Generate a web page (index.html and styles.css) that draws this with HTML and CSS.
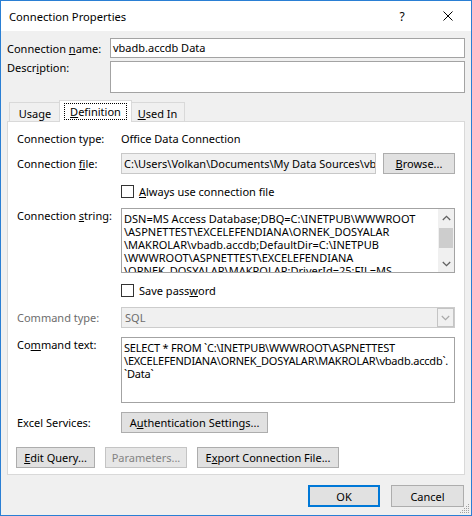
FILE: index.html
```html
<!DOCTYPE html>
<html>
<head>
<meta charset="utf-8">
<title>Connection Properties</title>
<link rel="stylesheet" href="styles.css">
</head>
<body>
<div class="win">
  <div class="titlebar">
    <div class="title">Connection Properties</div>
    <div class="tbtn help">?</div>
    <div class="tbtn close"><svg width="10" height="10" viewBox="0 0 10 10"><path d="M0.5 0.5L9.5 9.5M9.5 0.5L0.5 9.5" stroke="#000" stroke-width="1" fill="none"/></svg></div>
  </div>
  <div class="content">
    <div class="frow r-name">
      <div class="flabel">Connection <u>n</u>ame:</div>
      <div class="edit name">vbadb.accdb Data</div>
    </div>
    <div class="frow r-desc">
      <div class="flabel top">Descr<u>i</u>ption:</div>
      <div class="edit desc"></div>
    </div>
    <div class="tabs">
      <div class="tab t-usage">Usa<u>g</u>e</div>
      <div class="tab t-def active"><span class="focus"><u>D</u>efinition</span></div>
      <div class="tab t-used"><u>U</u>sed In</div>
    </div>
    <div class="panel">
      <div class="prow p1">
        <div class="plabel">Connection type:</div>
        <div class="val">Office Data Connection</div>
      </div>
      <div class="prow p2">
        <div class="plabel">Connection <u>f</u>ile:</div>
        <div class="edit ro file"><span class="nowrap">C:\Users\Volkan\Documents\My Data Sources\vb</span></div>
        <div class="btn browse"><u>B</u>rowse...</div>
      </div>
      <div class="prow p3 chkrow">
        <div class="plabel"></div>
        <span class="chk"></span>
        <span class="chktext"><u>A</u>lways use connection file</span>
      </div>
      <div class="prow p4 toprow">
        <div class="plabel">Connection <u>s</u>tring:</div>
        <div class="edit multi cs">
          <div class="lines">
            <div>DSN=MS Access Database;DBQ=C:\INETPUB\WWWROOT</div>
            <div>\ASPNETTEST\EXCELEFENDIANA\ORNEK_DOSYALAR</div>
            <div>\MAKROLAR\vbadb.accdb;DefaultDir=C:\INETPUB</div>
            <div>\WWWROOT\ASPNETTEST\EXCELEFENDIANA</div>
            <div>\ORNEK_DOSYALAR\MAKROLAR;DriverId=25;FIL=MS</div>
          </div>
          <div class="sb">
            <div class="sbarrow"><svg width="9" height="6" viewBox="0 0 9 6"><path d="M0.8 5L4.5 1.3L8.2 5" stroke="#606060" stroke-width="1.3" fill="none"/></svg></div>
            <div class="sbtrack"><div class="thumb"></div></div>
            <div class="sbarrow"><svg width="9" height="6" viewBox="0 0 9 6"><path d="M0.8 1L4.5 4.7L8.2 1" stroke="#606060" stroke-width="1.3" fill="none"/></svg></div>
          </div>
        </div>
      </div>
      <div class="prow p5 chkrow">
        <div class="plabel"></div>
        <span class="chk"></span>
        <span class="chktext">Save pass<u>w</u>ord</span>
      </div>
      <div class="prow p6">
        <div class="plabel dis">Command type:</div>
        <div class="select">
          <span class="selval">SQL</span>
          <span class="selbtn"><svg width="9" height="6" viewBox="0 0 9 6"><path d="M0.8 1L4.5 4.7L8.2 1" stroke="#a8a8a8" stroke-width="1.2" fill="none"/></svg></span>
        </div>
      </div>
      <div class="prow p7 toprow">
        <div class="plabel">Co<u>m</u>mand text:</div>
        <div class="edit multi ct">
          <div class="lines">
            <div>SELECT * FROM `C:\INETPUB\WWWROOT\ASPNETTEST</div>
            <div>\EXCELEFENDIANA\ORNEK_DOSYALAR\MAKROLAR\vbadb.accdb`.</div>
            <div>`Data`</div>
          </div>
        </div>
      </div>
      <div class="prow p8">
        <div class="plabel">Excel Services:</div>
        <div class="btn auth">A<u>u</u>thentication Settings...</div>
      </div>
      <div class="prow p9">
        <div class="btn editq"><u>E</u>dit Query...</div>
        <div class="btn params disabled">Parameters...</div>
        <div class="btn export">E<u>x</u>port Connection File...</div>
      </div>
    </div>
    <div class="footer">
      <div class="btn ok">OK</div>
      <div class="btn cancel">Cancel</div>
    </div>
  </div>
  <div class="grip"><svg width="10" height="10" viewBox="0 0 10 10"><g fill="#a0a0a0"><rect x="8" y="0" width="1" height="1"/><rect x="6" y="2" width="1" height="1"/><rect x="8" y="2" width="1" height="1"/><rect x="4" y="4" width="1" height="1"/><rect x="6" y="4" width="1" height="1"/><rect x="8" y="4" width="1" height="1"/><rect x="2" y="6" width="1" height="1"/><rect x="4" y="6" width="1" height="1"/><rect x="6" y="6" width="1" height="1"/><rect x="8" y="6" width="1" height="1"/><rect x="0" y="8" width="1" height="1"/><rect x="2" y="8" width="1" height="1"/><rect x="4" y="8" width="1" height="1"/><rect x="6" y="8" width="1" height="1"/><rect x="8" y="8" width="1" height="1"/></g></svg></div>
</div>
</body>
</html>
```
FILE: styles.css
```css
* { box-sizing: border-box; }
html, body { margin: 0; padding: 0; }
body {
  width: 472px;
  height: 516px;
  overflow: hidden;
  background: #ffffff;
  font-family: "Noto Sans", "Open Sans", sans-serif;
  font-size: 11px;
  line-height: 15px;
  color: #000;
}
u { text-decoration: underline; text-underline-offset: 1px; text-decoration-thickness: 1px; }

.win {
  width: 472px;
  height: 516px;
  border: 1px solid #2a7fd4;
  background: #f0f0f0;
  display: flex;
  flex-direction: column;
  position: relative;
}

.titlebar {
  height: 30px;
  flex-shrink: 0;
  background: #ffffff;
  display: flex;
  align-items: center;
}
.title { flex: 1; padding-left: 8px; font-size: 11.2px; padding-top: 1px; }
.tbtn {
  width: 46px;
  height: 30px;
  display: flex;
  align-items: center;
  justify-content: center;
}
.help { font-size: 12px; padding-top: 1px; }

.content {
  flex: 1;
  display: flex;
  flex-direction: column;
  padding: 0 6px;
}

.frow { display: flex; }
.r-name { margin-top: 7px; height: 20px; align-items: center; }
.r-desc { margin-top: 3px; height: 32px; align-items: flex-start; }
.flabel { width: 103px; flex-shrink: 0; }
.flabel.top { margin-top: -1px; }

.edit {
  border: 1px solid #a3a3a3;
  background: #ffffff;
  overflow: hidden;
  white-space: nowrap;
}
.name { flex: 1; height: 20px; padding: 1px 0 0 2px; line-height: 16px; }
.desc { flex: 1; height: 32px; }

.tabs {
  margin-top: 7px;
  height: 21px;
  display: flex;
  align-items: flex-end;
  padding-left: 2px;
}
.tab {
  height: 19px;
  border: 1px solid #d9d9d9;
  border-bottom: none;
  background: #f0f0f0;
  text-align: center;
  padding-top: 3px;
}
.t-usage { width: 52px; }
.t-def {
  width: 73px;
  margin-left: -2px;
  height: 22px;
  margin-bottom: -1px;
  background: #ffffff;
  position: relative;
  z-index: 2;
  padding-top: 2px;
  display: flex;
  justify-content: center;
}
.t-used { width: 55px; margin-left: -2px; }
.focus {
  display: block;
  border: 1px dotted #000;
  width: 63px;
  height: 17px;
  line-height: 15px;
}

.panel {
  height: 354px;
  flex-shrink: 0;
  border: 1px solid #d9d9d9;
  background: #ffffff;
  padding: 0 8px 6px 9px;
  display: flex;
  flex-direction: column;
}
.prow { display: flex; align-items: center; flex-shrink: 0; }
.toprow { align-items: flex-start; }
.plabel { width: 104px; flex-shrink: 0; }
.plabel.dis { color: #6d6d6d; }

.p1 { margin-top: 9px; height: 15px; }
.p2 { margin-top: 7px; height: 21px; }
.p3 { margin-top: 10px; height: 15px; }
.p4 { margin-top: 9px; height: 65px; }
.p5 { margin-top: 10px; height: 15px; }
.p6 { margin-top: 9px; height: 21px; }
.p7 { margin-top: 9px; height: 66px; }
.p8 { margin-top: 9px; height: 21px; }
.p9 { margin-top: 14px; height: 21px; margin-left: -1px; gap: 10px; }

.ro { background: #f0f0f0; border-color: #c8c8c8; }
.file { width: 255px; height: 21px; padding: 2px 0 0 2px; line-height: 15px; }
.nowrap { white-space: nowrap; }

.btn {
  height: 21px;
  border: 1px solid #adadad;
  background: #e1e1e1;
  display: flex;
  align-items: center;
  justify-content: center;
  white-space: nowrap;
  flex-shrink: 0;
}
.browse { margin-left: 7px; width: 72px; }
.auth { width: 147px; }
.editq { width: 79px; }
.params { width: 82px; }
.export { width: 142px; }
.disabled { color: #838383; background: #e6e6e6; border-color: #c4c4c4; }

.chk {
  width: 13px;
  height: 13px;
  border: 1px solid #333333;
  background: #ffffff;
  flex-shrink: 0;
}
.chktext { margin-left: 5px; }

.multi { width: 334px; display: flex; white-space: nowrap; }
.cs { height: 65px; }
.ct { height: 66px; letter-spacing: -0.2px; }
.lines { flex: 1; padding: 3px 0 0 2px; line-height: 13px; overflow: hidden; }

.sb {
  width: 16px;
  flex-shrink: 0;
  display: flex;
  flex-direction: column;
  background: #f0f0f0;
}
.sbarrow {
  height: 17px;
  display: flex;
  align-items: center;
  justify-content: center;
  flex-shrink: 0;
}
.sbtrack { flex: 1; padding: 2px 0 0 0; }
.thumb { height: 20px; margin: 0 1px; background: #cdcdcd; }

.select {
  width: 334px;
  height: 21px;
  border: 1px solid #cccccc;
  background: #f0f0f0;
  display: flex;
  align-items: stretch;
}
.selval { flex: 1; color: #6d6d6d; padding: 2px 0 0 3px; }
.selbtn {
  width: 17px;
  border: 1px solid #c4c4c4;
  display: flex;
  align-items: center;
  justify-content: center;
}

.footer {
  margin-top: 10px;
  display: flex;
  justify-content: flex-end;
  gap: 11px;
  padding-right: 1px;
}
.ok { width: 72px; height: 22px; border: 2px solid #0078d7; }
.cancel { width: 73px; height: 22px; }

.grip {
  position: absolute;
  right: 1px;
  bottom: 1px;
  width: 10px;
  height: 10px;
  line-height: 0;
}
```
